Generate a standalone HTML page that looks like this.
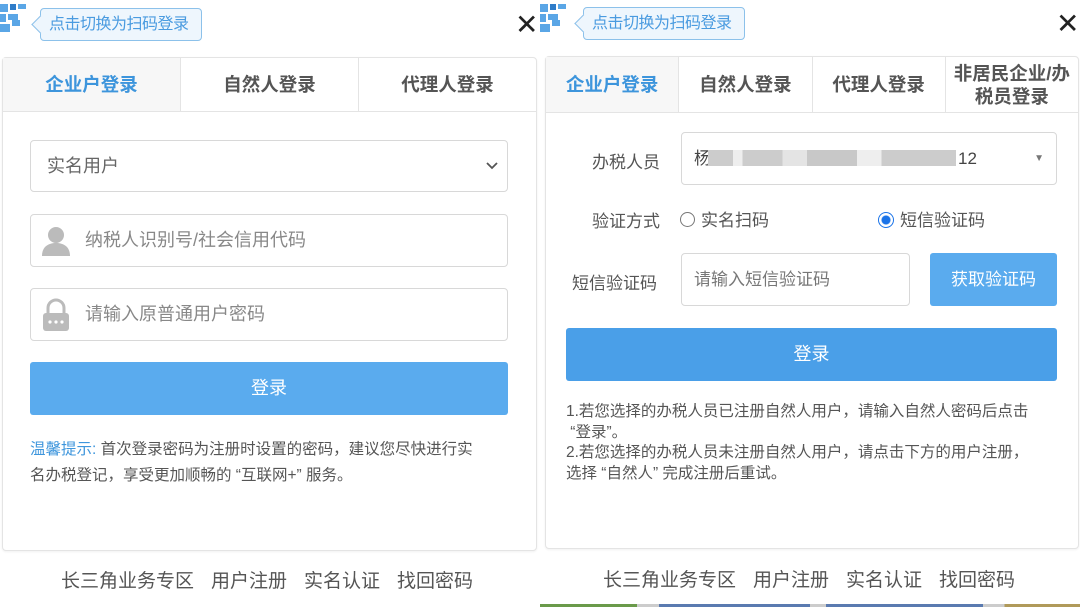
<!DOCTYPE html>
<html><head><meta charset="utf-8">
<style>
*{box-sizing:border-box;margin:0;padding:0}
body{width:1080px;height:607px;background:#fff;position:relative;overflow:hidden;font-family:"Liberation Sans","Noto Sans CJK SC",sans-serif;color:#555}
.abs{position:absolute}
.qr div{position:absolute;background:#5aa6e6}
.tip{position:absolute;border:1px solid #8cc1ea;background:#eef6fd;border-radius:4px;color:#4a9be0;font-size:16px;line-height:31px;padding-left:8px;letter-spacing:-0.5px}
.tip:before{content:"";position:absolute;left:-7px;top:9px;width:12px;height:12px;background:#eef6fd;border-left:1px solid #8cc1ea;border-bottom:1px solid #8cc1ea;transform:rotate(45deg)}
.x{position:absolute;font-size:28px;color:#222;line-height:28px}
.card{position:absolute;border:1px solid #e4e4e4;border-radius:4px;background:#fff;box-shadow:0 1px 2px rgba(0,0,0,.06)}
.tabs{position:absolute;left:0;right:0;top:0;height:54px;display:flex;border-bottom:1px solid #e4e4e4}
.tabs div{flex:1;display:flex;align-items:center;justify-content:center;font-size:18.5px;font-weight:bold;color:#555;border-left:1px solid #e4e4e4;text-align:center;line-height:23px}
.tabs div:first-child{border-left:none;background:#f7f7f7;color:#3d95dc}
.box{position:absolute;border:1px solid #d8d8d8;border-radius:4px;background:#fff;font-size:18px;color:#666}
.btn{position:absolute;background:#5aabee;color:#fff;border-radius:3px;text-align:center;font-size:18px}
.ft{position:absolute;font-size:19px;color:#555;white-space:nowrap}
.ft span{display:inline-block;width:17px}
</style></head><body>
<div class="qr abs" style="left:0;top:0;width:40px;height:40px">
<div style="left:0;top:4px;width:8px;height:8px"></div><div style="left:10px;top:4px;width:6px;height:6px;background:#2e7cc9"></div>
<div style="left:18px;top:4px;width:8px;height:5px"></div><div style="left:0;top:14px;width:6px;height:8px"></div>
<div style="left:8px;top:14px;width:10px;height:6px"></div><div style="left:0;top:24px;width:10px;height:8px"></div><div style="left:12px;top:20px;width:8px;height:6px"></div>
</div>
<div class="tip" style="left:40px;top:8px;width:162px;height:33px">点击切换为扫码登录</div>
<div class="x" style="left:515px;top:11px">✕</div>
<div class="qr abs" style="left:540px;top:0;width:40px;height:40px">
<div style="left:0;top:4px;width:8px;height:8px"></div><div style="left:10px;top:4px;width:6px;height:6px;background:#2e7cc9"></div>
<div style="left:18px;top:4px;width:8px;height:5px"></div><div style="left:0;top:14px;width:6px;height:8px"></div>
<div style="left:8px;top:14px;width:10px;height:6px"></div><div style="left:0;top:24px;width:10px;height:8px"></div><div style="left:12px;top:20px;width:8px;height:6px"></div>
</div>
<div class="tip" style="left:583px;top:7px;width:162px;height:33px">点击切换为扫码登录</div>
<div class="x" style="left:1056px;top:10px">✕</div>

<div class="card" style="left:2px;top:57px;width:535px;height:494px">
<div class="tabs"><div>企业户登录</div><div>自然人登录</div><div>代理人登录</div></div>
</div>
<div class="box" style="left:30px;top:140px;width:478px;height:52px;line-height:50px;padding-left:16px">实名用户
<svg style="position:absolute;right:9px;top:21px" width="12" height="8" viewBox="0 0 12 8"><path d="M1 1l5 5 5-5" stroke="#555" stroke-width="1.8" fill="none"/></svg></div>
<div class="box" style="left:30px;top:214px;width:478px;height:53px;line-height:51px;padding-left:54px;color:#888">
<svg style="position:absolute;left:10px;top:10px" width="30" height="32" viewBox="0 0 30 32"><circle cx="15" cy="10" r="8" fill="#bbb"/><path d="M1 31c0-9 6-13 14-13s14 4 14 13z" fill="#bbb"/></svg>纳税人识别号/社会信用代码</div>
<div class="box" style="left:30px;top:288px;width:478px;height:53px;line-height:51px;padding-left:54px;color:#888">
<svg style="position:absolute;left:10px;top:8px" width="30" height="36" viewBox="0 0 30 36"><path d="M7 16V11a8 8 0 0116 0v5" stroke="#bbb" stroke-width="3" fill="none"/><rect x="2" y="16" width="26" height="18" rx="3" fill="#bbb"/><circle cx="9" cy="25" r="1.6" fill="#fff"/><circle cx="15" cy="25" r="1.6" fill="#fff"/><circle cx="21" cy="25" r="1.6" fill="#fff"/></svg>请输入原普通用户密码</div>
<div class="btn" style="left:30px;top:362px;width:478px;height:53px;line-height:53px">登录</div>
<div class="abs" style="left:30px;top:437px;width:474px;font-size:15.5px;line-height:26px;color:#555"><span style="color:#3d95dc">温馨提示:</span> 首次登录密码为注册时设置的密码，建议您尽快进行实<br>名办税登记，享受更加顺畅的 “互联网+” 服务。</div>
<div class="ft" style="left:61px;top:566px">长三角业务专区<span></span>用户注册<span></span>实名认证<span></span>找回密码</div>

<div class="card" style="left:545px;top:56px;width:534px;height:493px">
<div class="tabs" style="height:56px"><div>企业户登录</div><div>自然人登录</div><div>代理人登录</div><div>非居民企业/办<br>税员登录</div></div>
</div>
<div class="abs" style="left:592px;top:148px;font-size:17px;color:#555">办税人员</div>
<div class="box" style="left:681px;top:132px;width:376px;height:53px;line-height:51px;padding-left:12px;color:#444;font-size:17px">
<span>杨</span>
<span style="position:absolute;left:26px;top:17px;width:248px;height:16px;background:linear-gradient(90deg,#ccc 0 10%,#eee 10% 14%,#ccc 14% 30%,#e4e4e4 30% 40%,#c8c8c8 40% 60%,#eee 60% 70%,#ccc 70% 100%)"></span>
<span style="position:absolute;left:276px">12</span>
<span style="position:absolute;right:12px;top:0;font-size:10px;color:#777">▼</span></div>
<div class="abs" style="left:592px;top:207px;font-size:17px;color:#555">验证方式</div>
<div class="abs" style="left:680px;top:206px;font-size:17px;color:#555"><span style="display:inline-block;width:15px;height:15px;border:1px solid #777;border-radius:50%;vertical-align:-1px;margin-right:6px"></span>实名扫码</div>
<div class="abs" style="left:878px;top:206px;font-size:17px;color:#555"><span style="display:inline-block;width:16px;height:16px;border:1px solid #1a73e8;border-radius:50%;vertical-align:-2px;margin-right:6px;background:radial-gradient(circle,#1a73e8 0 4px,#fff 5px)"></span>短信验证码</div>
<div class="abs" style="left:572px;top:269px;font-size:17px;color:#555">短信验证码</div>
<div class="box" style="left:681px;top:253px;width:229px;height:53px;line-height:51px;padding-left:12px;font-size:17px;color:#777">请输入短信验证码</div>
<div class="btn" style="left:930px;top:253px;width:127px;height:53px;line-height:53px;font-size:17px">获取验证码</div>
<div class="btn" style="left:566px;top:328px;width:491px;height:53px;line-height:53px;background:#4a9fe8">登录</div>
<div class="abs" style="left:566px;top:402px;width:490px;font-size:15.5px;line-height:20.5px;color:#555">1.若您选择的办税人员已注册自然人用户，请输入自然人密码后点击<br>&nbsp;“登录”。<br>2.若您选择的办税人员未注册自然人用户，请点击下方的用户注册，<br>选择 “自然人” 完成注册后重试。</div>
<div class="ft" style="left:603px;top:565px">长三角业务专区<span></span>用户注册<span></span>实名认证<span></span>找回密码</div>
<div class="abs" style="left:540px;top:604px;width:540px;height:3px;background:linear-gradient(90deg,#6a9a4a 0 18%,#ccc 18% 22%,#5a7ab0 22% 50%,#ccc 50% 53%,#5a7ab0 53% 82%,#ccc 82% 86%,#b09a5a 86%)"></div>
</body></html>
